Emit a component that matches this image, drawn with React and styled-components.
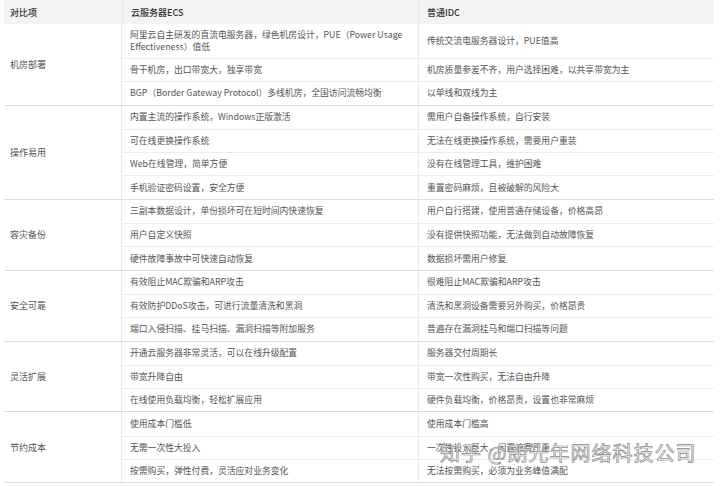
import styled, { createGlobalStyle } from "styled-components";

const Global = createGlobalStyle`
  body { margin: 0; background: #fff; font-family: "Noto Sans CJK SC", "Liberation Sans", sans-serif; overflow: hidden; }
`;

const Page = styled.div`
  position: relative;
  width: 720px;
  height: 486px;
  padding: 0 6px 0 4px;
  box-sizing: border-box;
`;

const Header = styled.div`
  display: grid;
  grid-template-columns: 118px 296px 1fr;
  background: #f3f3f3;
  height: 24px;
  align-items: center;
  font-size: 9px;
  color: #333;
  font-weight: 500;
`;

const HCell = styled.div`
  padding-left: ${({ first }) => (first ? "6px" : "8px")};
  height: 100%;
  display: flex;
  align-items: center;
  border-left: ${({ first }) => (first ? "none" : "1px solid #e8e8e8")};
`;

const Section = styled.div`
  display: flex;
  border-bottom: 1px solid #dcdcdc;
`;

const Label = styled.div`
  width: 118px;
  flex-shrink: 0;
  display: flex;
  align-items: center;
  padding-left: 6px;
  box-sizing: border-box;
  font-size: 9px;
  color: #555;
  border-right: 1px solid #e8e8e8;
`;

const Rows = styled.div`
  flex: 1;
`;

const Row = styled.div`
  display: grid;
  grid-template-columns: 296px 1fr;
  min-height: ${({ tall }) => (tall ? "34px" : "23.3px")};
  border-top: ${({ first }) => (first ? "none" : "1px solid #ececec")};
  box-sizing: border-box;
`;

const Cell = styled.div`
  display: flex;
  align-items: center;
  padding: 0 12px 0 8px;
  font-size: 8.8px;
  line-height: 12px;
  color: #555;
  border-left: ${({ right }) => (right ? "1px solid #e8e8e8" : "none")};
`;

const Watermark = styled.div`
  position: absolute;
  left: 440px;
  top: 438px;
  font-size: 20px;
  color: rgba(255, 255, 255, 0.85);
  -webkit-text-stroke: 0.7px #888;
  letter-spacing: 1px;
`;

const data = [
  ["机房部署", [
    ["阿里云自主研发的直流电服务器，绿色机房设计，PUE（Power Usage Effectiveness）值低", "传统交流电服务器设计，PUE值高"],
    ["骨干机房，出口带宽大，独享带宽", "机房质量参差不齐，用户选择困难，以共享带宽为主"],
    ["BGP（Border Gateway Protocol）多线机房，全国访问流畅均衡", "以单线和双线为主"],
  ]],
  ["操作易用", [
    ["内置主流的操作系统，Windows正版激活", "需用户自备操作系统，自行安装"],
    ["可在线更换操作系统", "无法在线更换操作系统，需要用户重装"],
    ["Web在线管理，简单方便", "没有在线管理工具，维护困难"],
    ["手机验证密码设置，安全方便", "重置密码麻烦，且被破解的风险大"],
  ]],
  ["容灾备份", [
    ["三副本数据设计，单份损坏可在短时间内快速恢复", "用户自行搭建，使用普通存储设备，价格高昂"],
    ["用户自定义快照", "没有提供快照功能，无法做到自动故障恢复"],
    ["硬件故障事故中可快速自动恢复", "数据损坏需用户修复"],
  ]],
  ["安全可靠", [
    ["有效阻止MAC欺骗和ARP攻击", "很难阻止MAC欺骗和ARP攻击"],
    ["有效防护DDoS攻击，可进行流量清洗和黑洞", "清洗和黑洞设备需要另外购买，价格昂贵"],
    ["端口入侵扫描、挂马扫描、漏洞扫描等附加服务", "普遍存在漏洞挂马和端口扫描等问题"],
  ]],
  ["灵活扩展", [
    ["开通云服务器非常灵活，可以在线升级配置", "服务器交付周期长"],
    ["带宽升降自由", "带宽一次性购买，无法自由升降"],
    ["在线使用负载均衡，轻松扩展应用", "硬件负载均衡，价格昂贵，设置也非常麻烦"],
  ]],
  ["节约成本", [
    ["使用成本门槛低", "使用成本门槛高"],
    ["无需一次性大投入", "一次性投入巨大，闲置浪费严重"],
    ["按需购买，弹性付费，灵活应对业务变化", "无法按需购买，必须为业务峰值满配"],
  ]],
];

export default function App() {
  return (
    <Page>
      <Global />
      <Header>
        <HCell first>对比项</HCell>
        <HCell>云服务器ECS</HCell>
        <HCell>普通IDC</HCell>
      </Header>
      {data.map(([label, rows], si) => (
        <Section key={label}>
          <Label>{label}</Label>
          <Rows>
            {rows.map(([a, b], i) => (
              <Row key={i} first={i === 0} tall={si === 0 && i === 0}>
                <Cell>{a}</Cell>
                <Cell right>{b}</Cell>
              </Row>
            ))}
          </Rows>
        </Section>
      ))}
      <Watermark>知乎 @朗光年网络科技公司</Watermark>
    </Page>
  );
}
